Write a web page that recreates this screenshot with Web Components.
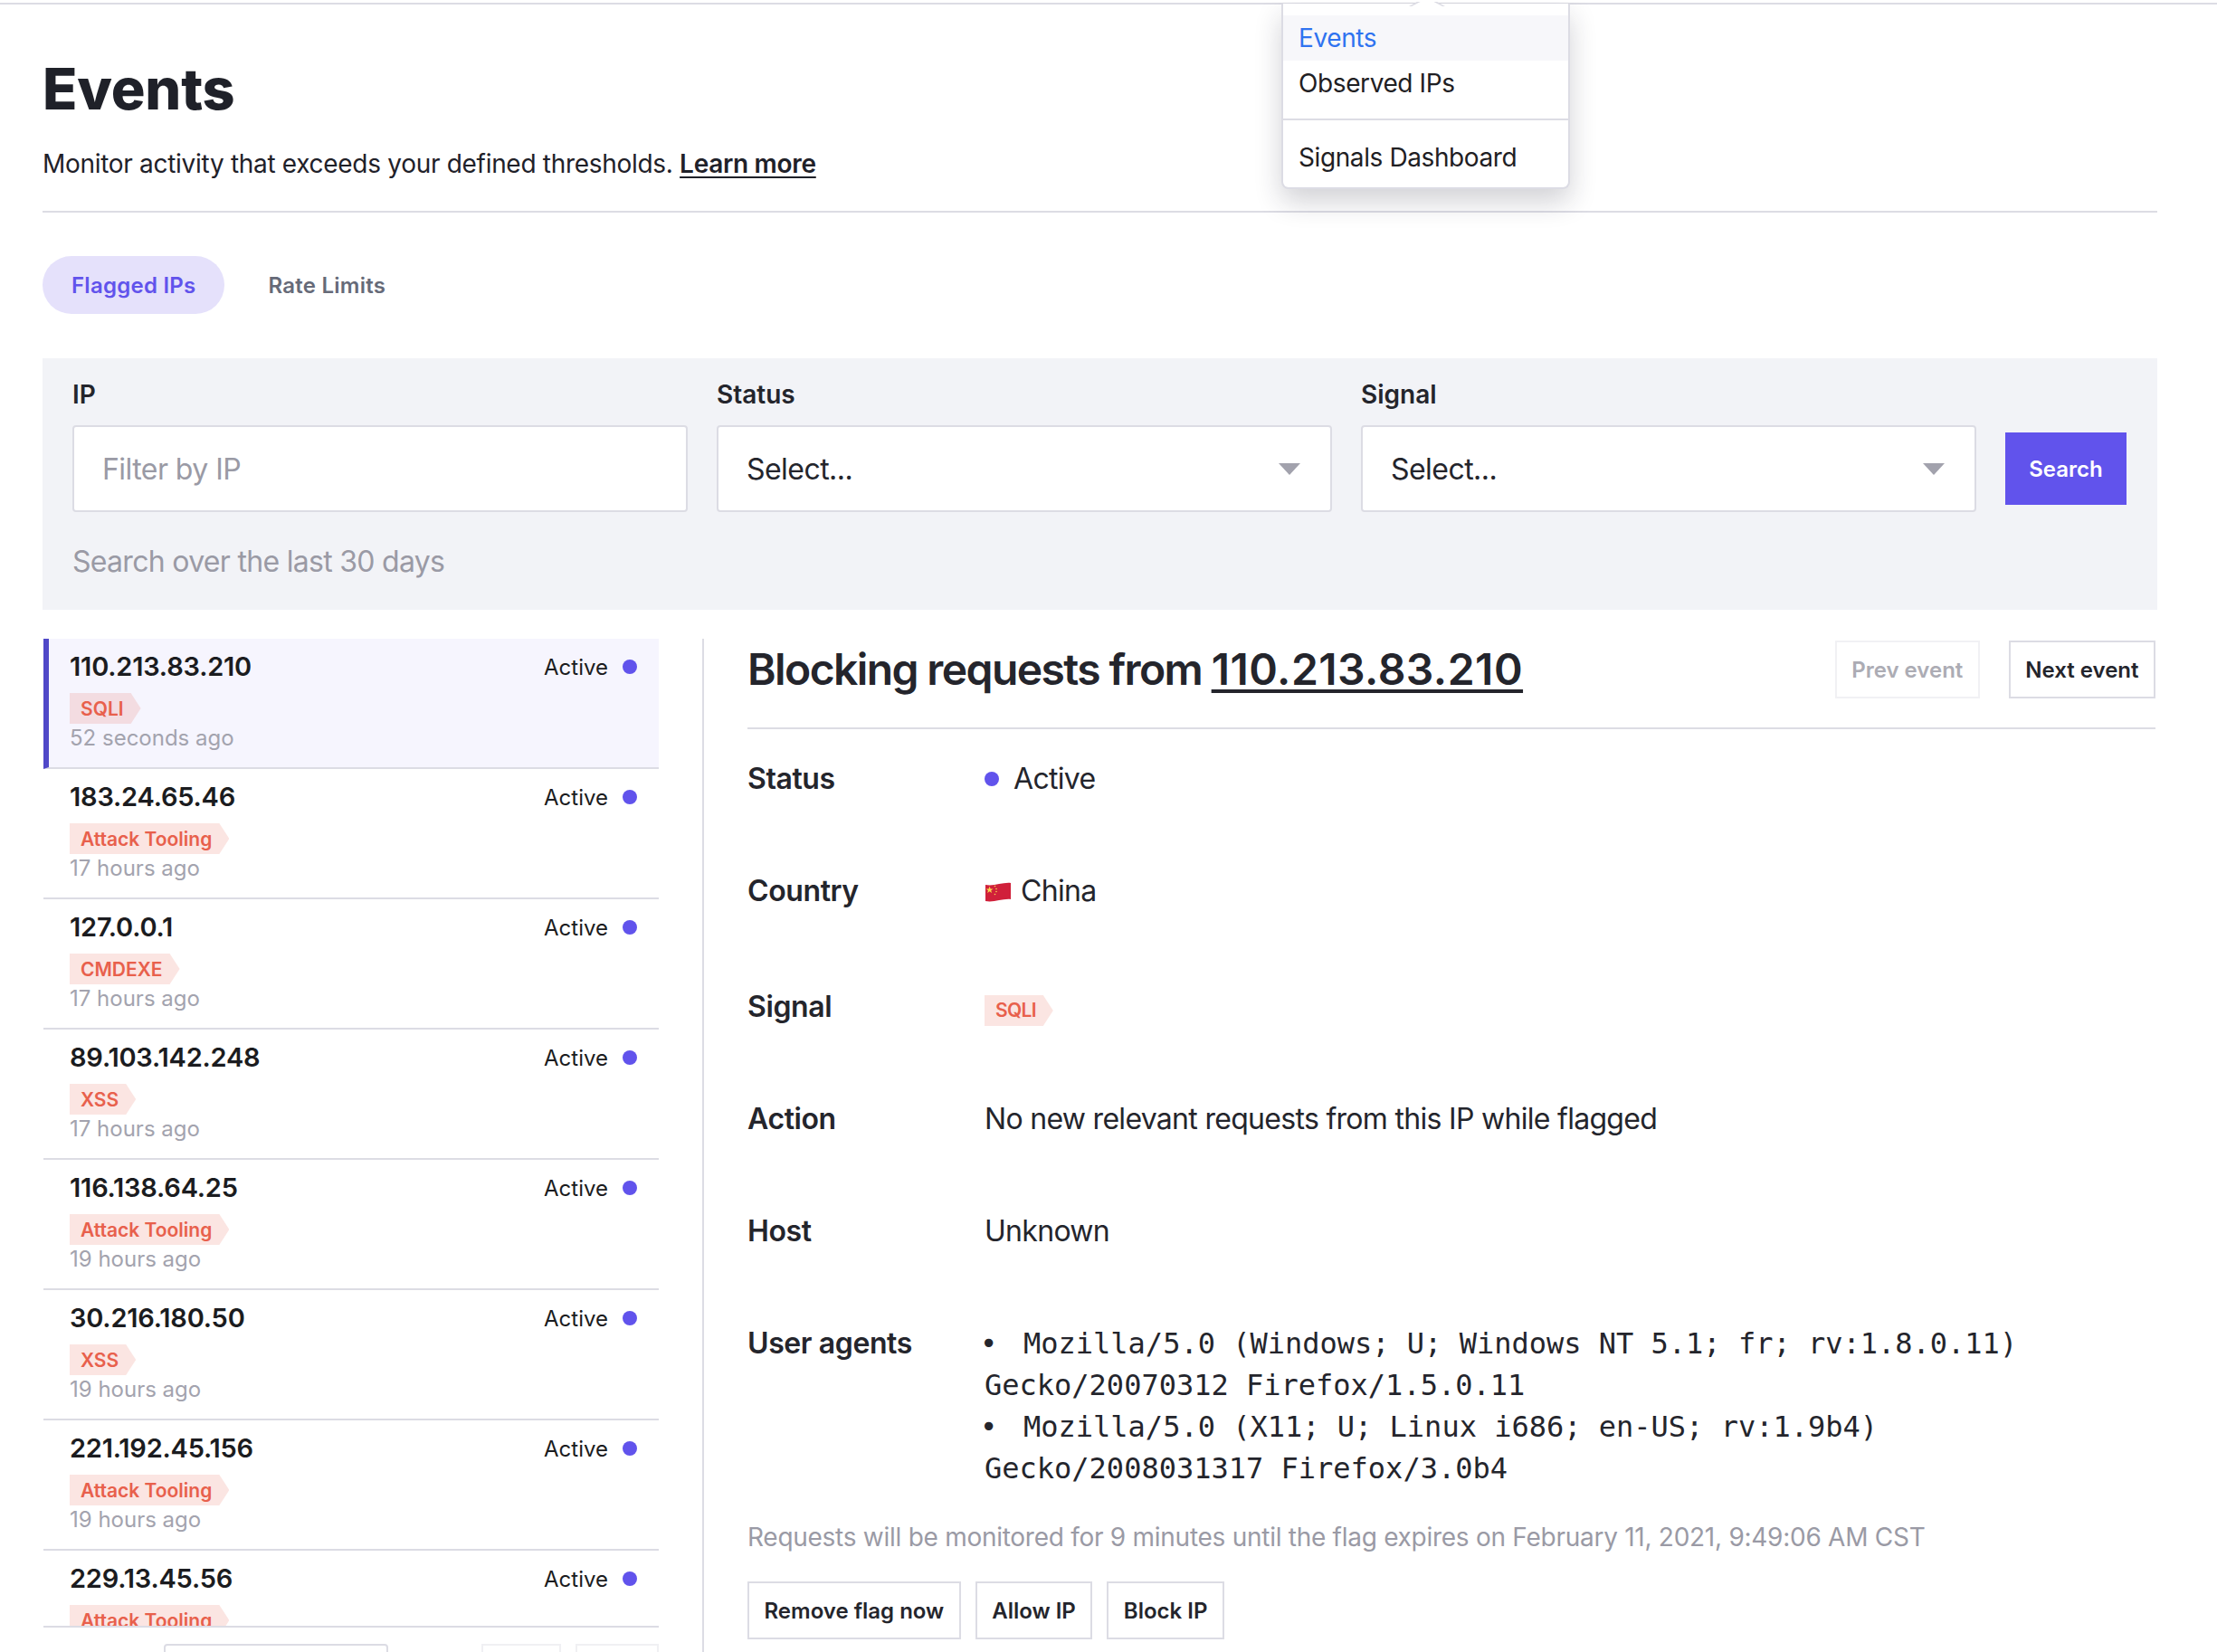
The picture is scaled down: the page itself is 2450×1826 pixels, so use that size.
<!DOCTYPE html>
<html>
<head>
<meta charset="utf-8">
<title>Events</title>
<style>
  html, body { margin: 0; height: 1826px; overflow: hidden; background: #fff; }
  body { font-family: Inter, "Liberation Sans", sans-serif; color: #1f2129; }
</style>
</head>
<body>
<events-page></events-page>
<script>
const BORDER = '#dcdce4';

class SignalTag extends HTMLElement {
  constructor() {
    super();
    this.attachShadow({mode:'open'}).innerHTML = `
    <style>
      :host { display: inline-flex; align-items: center; height: 34px; padding: 0 19px 0 12px;
        background: rgba(232,96,76,.16); color: #e8604c; font-size: 21px; font-weight: 600;
        clip-path: polygon(0 0, calc(100% - 11px) 0, 100% 50%, calc(100% - 11px) 100%, 0 100%); }
    </style><slot></slot>`;
  }
}

class EventRow extends HTMLElement {
  constructor() {
    super();
    this.attachShadow({mode:'open'}).innerHTML = `
    <style>
      :host { display: block; flex: none; height: 144px; box-sizing: border-box; border-bottom: 2px solid ${BORDER};
        padding: 14px 24px 0 29px; }
      :host([selected]) { background: #f6f5fe; border-left: 6px solid #5048c8; padding-left: 23px; }
      .top { display: flex; justify-content: space-between; align-items: center; height: 32px; }
      .ip { font-size: 29px; font-weight: 600; color: #1b1c20; letter-spacing: -.2px; }
      .status { display: flex; align-items: center; gap: 16px; font-size: 24px; color: #1b1c20; margin-top: 2px; }
      .dot { width: 16px; height: 16px; border-radius: 50%; background: #6153ec; }
      .tag { display: flex; margin-top: 14px; }
      .ago { font-size: 24px; line-height: 32px; color: #a3a3ae; }
    </style>
    <div class="top"><span class="ip"></span><span class="status">Active<span class="dot"></span></span></div>
    <div class="tag"><signal-tag></signal-tag></div>
    <div class="ago"></div>`;
    const s = this.shadowRoot;
    s.querySelector('.ip').textContent = this.getAttribute('ip');
    s.querySelector('signal-tag').textContent = this.getAttribute('signal');
    s.querySelector('.ago').textContent = this.getAttribute('ago');
  }
}

class EventList extends HTMLElement {
  constructor() {
    super();
    this.attachShadow({mode:'open'}).innerHTML = `
    <style>
      :host { display: block; width: 680px; flex: none; }
      .rows { display: flex; flex-direction: column; height: 1091px; overflow: hidden; border-bottom: 2px solid ${BORDER}; }
      .pager { display: flex; margin-top: 18px; padding-left: 133px; }
      .pager i { display: block; height: 60px; box-sizing: border-box; }
      .num { width: 248px; border: 2px solid ${BORDER}; border-radius: 4px; margin-right: 103px; }
      .page { width: 88px; border: 2px solid #f0f0f3; margin-right: 16px; }
      .page:last-child { width: 92px; margin-right: 0; }
    </style>
    <div class="rows"><slot></slot></div>
    <div class="pager"><i class="num"></i><i class="page"></i><i class="page"></i></div>`;
  }
}

class OutlineButton extends HTMLElement {
  constructor() {
    super();
    this.attachShadow({mode:'open'}).innerHTML = `
    <style>
      :host { display: inline-flex; align-items: center; justify-content: center; height: 64px; box-sizing: border-box;
        padding: 0 16.5px; border: 2px solid ${BORDER}; font-size: 24px; font-weight: 600; color: #24252c; }
      :host([disabled]) { border-color: #f1f1f4; color: #acacb4; }
    </style><slot></slot>`;
  }
}

class DetailRow extends HTMLElement {
  constructor() {
    super();
    this.attachShadow({mode:'open'}).innerHTML = `
    <style>
      :host { display: grid; grid-template-columns: 262px 1fr; min-height: 124px; align-items: start; font-size: 32px; line-height: 46px; }
      .label { font-weight: 600; color: #24252c; letter-spacing: -.4px; }
      .value { color: #24252c; letter-spacing: -.7px; }
    </style>
    <div class="label"></div><div class="value"><slot></slot></div>`;
    this.shadowRoot.querySelector('.label').textContent = this.getAttribute('label');
  }
}

class FilterField extends HTMLElement {
  constructor() {
    super();
    const ph = this.hasAttribute('placeholder');
    this.attachShadow({mode:'open'}).innerHTML = `
    <style>
      :host { display: block; width: 680px; flex: none; }
      label { display: block; font-size: 28px; line-height: 34px; font-weight: 600; color: #24252c; margin-bottom: 17px; }
      .box { height: 96px; box-sizing: border-box; background: #fff; border: 2px solid ${BORDER}; border-radius: 4px;
        display: flex; align-items: center; justify-content: space-between; padding: 0 32px 0 31px; font-size: 32px;
        letter-spacing: -.55px; color: ${ph ? '#9a9aa5' : '#24252c'}; }
      .arrow { width: 0; height: 0; border-left: 12px solid transparent; border-right: 12px solid transparent;
        border-top: 13px solid #a2a2ad; margin-right: 1px; }
    </style>
    <label></label>
    <div class="box"><span class="text"></span>${ph ? '' : '<span class="arrow"></span>'}</div>`;
    this.shadowRoot.querySelector('label').textContent = this.getAttribute('label');
    this.shadowRoot.querySelector('.text').textContent = this.getAttribute('placeholder') || 'Select...';
  }
}

class NavMenu extends HTMLElement {
  constructor() {
    super();
    this.attachShadow({mode:'open'}).innerHTML = `
    <style>
      :host { position: absolute; left: 1416px; top: 2px; width: 319px; height: 205px; box-sizing: border-box;
        background: #fff; border: 2px solid ${BORDER}; border-top: 0; border-radius: 0 0 8px 8px;
        box-shadow: 0 14px 30px rgba(30,30,50,.2); padding-top: 13px; font-size: 28px; letter-spacing: -.4px; color: #1f2023; }
      .item { height: 50px; display: flex; align-items: center; padding-left: 17px; }
      .on { background: #f7f7fa; color: #2f73f0; }
      .rule { height: 2px; background: ${BORDER}; margin: 14px 0 16px; }
      .notch { position: absolute; left: 139px; top: -7px; width: 40px; height: 10px; background: ${BORDER};
        clip-path: polygon(0 100%, 45% 0, 55% 0, 100% 100%); }
      .notch::after { content: ""; position: absolute; left: 3px; top: 2px; width: 34px; height: 8px; background: #fff;
        clip-path: polygon(0 100%, 45% 0, 55% 0, 100% 100%); }
    </style>
    <div class="notch"></div>
    <div class="item on">Events</div>
    <div class="item">Observed IPs</div>
    <div class="rule"></div>
    <div class="item">Signals Dashboard</div>`;
  }
}

class EventsPage extends HTMLElement {
  constructor() {
    super();
    const rows = [
      ['110.213.83.210', 'SQLI', '52 seconds ago'],
      ['183.24.65.46', 'Attack Tooling', '17 hours ago'],
      ['127.0.0.1', 'CMDEXE', '17 hours ago'],
      ['89.103.142.248', 'XSS', '17 hours ago'],
      ['116.138.64.25', 'Attack Tooling', '19 hours ago'],
      ['30.216.180.50', 'XSS', '19 hours ago'],
      ['221.192.45.156', 'Attack Tooling', '19 hours ago'],
      ['229.13.45.56', 'Attack Tooling', '19 hours ago']
    ].map((r, i) => `<event-row ${i == 0 ? 'selected' : ''} ip="${r[0]}" signal="${r[1]}" ago="${r[2]}"></event-row>`).join('');

    this.attachShadow({mode:'open'}).innerHTML = `
    <style>
      :host { display: block; position: relative; height: 1826px; overflow: hidden; box-sizing: border-box;
        border-top: 2px solid transparent; }
      a { color: inherit; }
      .topline { height: 2px; background: ${BORDER}; margin-top: 1px; }
      main { padding: 0 66px 0 47px; }
      h1 { margin: 0; padding-top: 57px; font-size: 63px; line-height: 72px; font-weight: 800; color: #1f2129; letter-spacing: -.2px; }
      .sub { margin-top: 27px; font-size: 28px; line-height: 40px; color: #1f2129; letter-spacing: -.3px; }
      .sub a { font-weight: 600; text-underline-offset: 4px; }
      .rule { height: 2px; background: ${BORDER}; }
      .sub + .rule { margin-top: 32px; }
      .tabs { display: flex; gap: 16px; margin-top: 48px; font-size: 24px; font-weight: 600; letter-spacing: .25px; }
      .tabs span { display: flex; align-items: center; height: 64px; padding: 0 32px; border-radius: 32px; color: #666a78; }
      .tabs .on { background: #e5e1fb; color: #6153ec; }
      .filters { margin-top: 49px; height: 278px; box-sizing: border-box; background: #f2f3f7; padding: 23px 34px 0 33px; }
      .fields { display: flex; gap: 32px; align-items: flex-end; }
      .go { flex: none; width: 134px; height: 80px; margin-bottom: 8px; display: flex; align-items: center; justify-content: center;
        background: #6153ec; color: #fff; font-size: 24px; font-weight: 600; }
      .hint { margin-top: 35px; font-size: 32px; line-height: 40px; color: #9a9aa5; letter-spacing: -.7px; }
      .body { display: flex; margin-top: 32px; }
      .body event-list { margin-left: 1px; }
      .detail { flex: 1; margin-left: 48px; border-left: 2px solid ${BORDER}; padding: 0 2px 0 48px; height: 1130px; box-sizing: border-box; }
      .head { display: flex; justify-content: space-between; align-items: flex-start; height: 98px; box-sizing: border-box; }
      h2 { margin: 2px 0 0; font-size: 48px; line-height: 64px; font-weight: 600; letter-spacing: -1.6px; color: #24252c; }
      h2 a { text-underline-offset: 5px; font-weight: 600; letter-spacing: .5px; }
      .nav { display: flex; gap: 32px; margin-top: 2px; }
      .list { padding-top: 32px; }
      .active { display: flex; align-items: center; gap: 16px; }
      .dot { width: 16px; height: 16px; border-radius: 50%; background: #6153ec; }
      .flag { display: flex; align-items: center; gap: 10px; }
      .mono { font-family: "DejaVu Sans Mono", "Liberation Mono", monospace; font-size: 32px; letter-spacing: 0; }
      .bullet { display: inline-block; width: 48px; margin-left: -5px; }
      .note { margin-top: 33px; font-size: 28px; line-height: 40px; color: #9a9aa5; letter-spacing: -.27px; }
      .acts { display: flex; gap: 16px; margin-top: 29px; }
    </style>
    <div class="topline"></div>
    <nav-menu></nav-menu>
    <main>
      <h1>Events</h1>
      <div class="sub">Monitor activity that exceeds your defined thresholds. <a href="#">Learn more</a></div>
      <div class="rule"></div>
      <div class="tabs"><span class="on">Flagged IPs</span><span>Rate Limits</span></div>
      <div class="filters">
        <div class="fields">
          <filter-field label="IP" placeholder="Filter by IP"></filter-field>
          <filter-field label="Status"></filter-field>
          <filter-field label="Signal"></filter-field>
          <div class="go">Search</div>
        </div>
        <div class="hint">Search over the last 30 days</div>
      </div>
      <div class="body">
        <event-list>${rows}</event-list>
        <section class="detail">
          <div class="head">
            <h2>Blocking requests from <a href="#">110.213.83.210</a></h2>
            <div class="nav"><outline-button disabled>Prev event</outline-button><outline-button>Next event</outline-button></div>
          </div>
          <div class="rule"></div>
          <div class="list">
            <detail-row label="Status"><div class="active"><span class="dot"></span>Active</div></detail-row>
            <detail-row label="Country" style="min-height:128px"><div class="flag">
              <svg width="30" height="23" viewBox="0 0 30 23">
                <path d="M1 4C10 6 20 1 29 2V20C20 19 10 24 1 22Z" fill="#d0203a"/>
                <path d="M6 5.500l1.200 3.300 3.400.100-2.700 2 1 3.300-2.900-2-2.900 2 1-3.300-2.700-2 3.400-.100Z" fill="#f8d64b" transform="translate(.5 1) scale(.85)"/>
                <circle cx="11.500" cy="5.500" r=".8" fill="#f8d64b"/><circle cx="13" cy="8.500" r=".8" fill="#f8d64b"/>
                <circle cx="13" cy="11.500" r=".8" fill="#f8d64b"/><circle cx="11.500" cy="14.500" r=".8" fill="#f8d64b"/>
              </svg>China</div></detail-row>
            <detail-row label="Signal"><signal-tag style="margin-top:7px">SQLI</signal-tag></detail-row>
            <detail-row label="Action">No new relevant requests from this IP while flagged</detail-row>
            <detail-row label="Host">Unknown</detail-row>
            <detail-row label="User agents"><div class="mono"><span class="bullet">•</span>Mozilla/5.0 (Windows; U; Windows NT 5.1; fr; rv:1.8.0.11)<br>Gecko/20070312 Firefox/1.5.0.11<br><span class="bullet">•</span>Mozilla/5.0 (X11; U; Linux i686; en-US; rv:1.9b4)<br>Gecko/2008031317 Firefox/3.0b4</div></detail-row>
          </div>
          <div class="note">Requests will be monitored for 9 minutes until the flag expires on February 11, 2021, 9:49:06 AM CST</div>
          <div class="acts"><outline-button>Remove flag now</outline-button><outline-button>Allow IP</outline-button><outline-button>Block IP</outline-button></div>
        </section>
      </div>
    </main>`;
  }
}

customElements.define('signal-tag', SignalTag);
customElements.define('event-row', EventRow);
customElements.define('event-list', EventList);
customElements.define('outline-button', OutlineButton);
customElements.define('detail-row', DetailRow);
customElements.define('filter-field', FilterField);
customElements.define('nav-menu', NavMenu);
customElements.define('events-page', EventsPage);
</script>
</body>
</html>
